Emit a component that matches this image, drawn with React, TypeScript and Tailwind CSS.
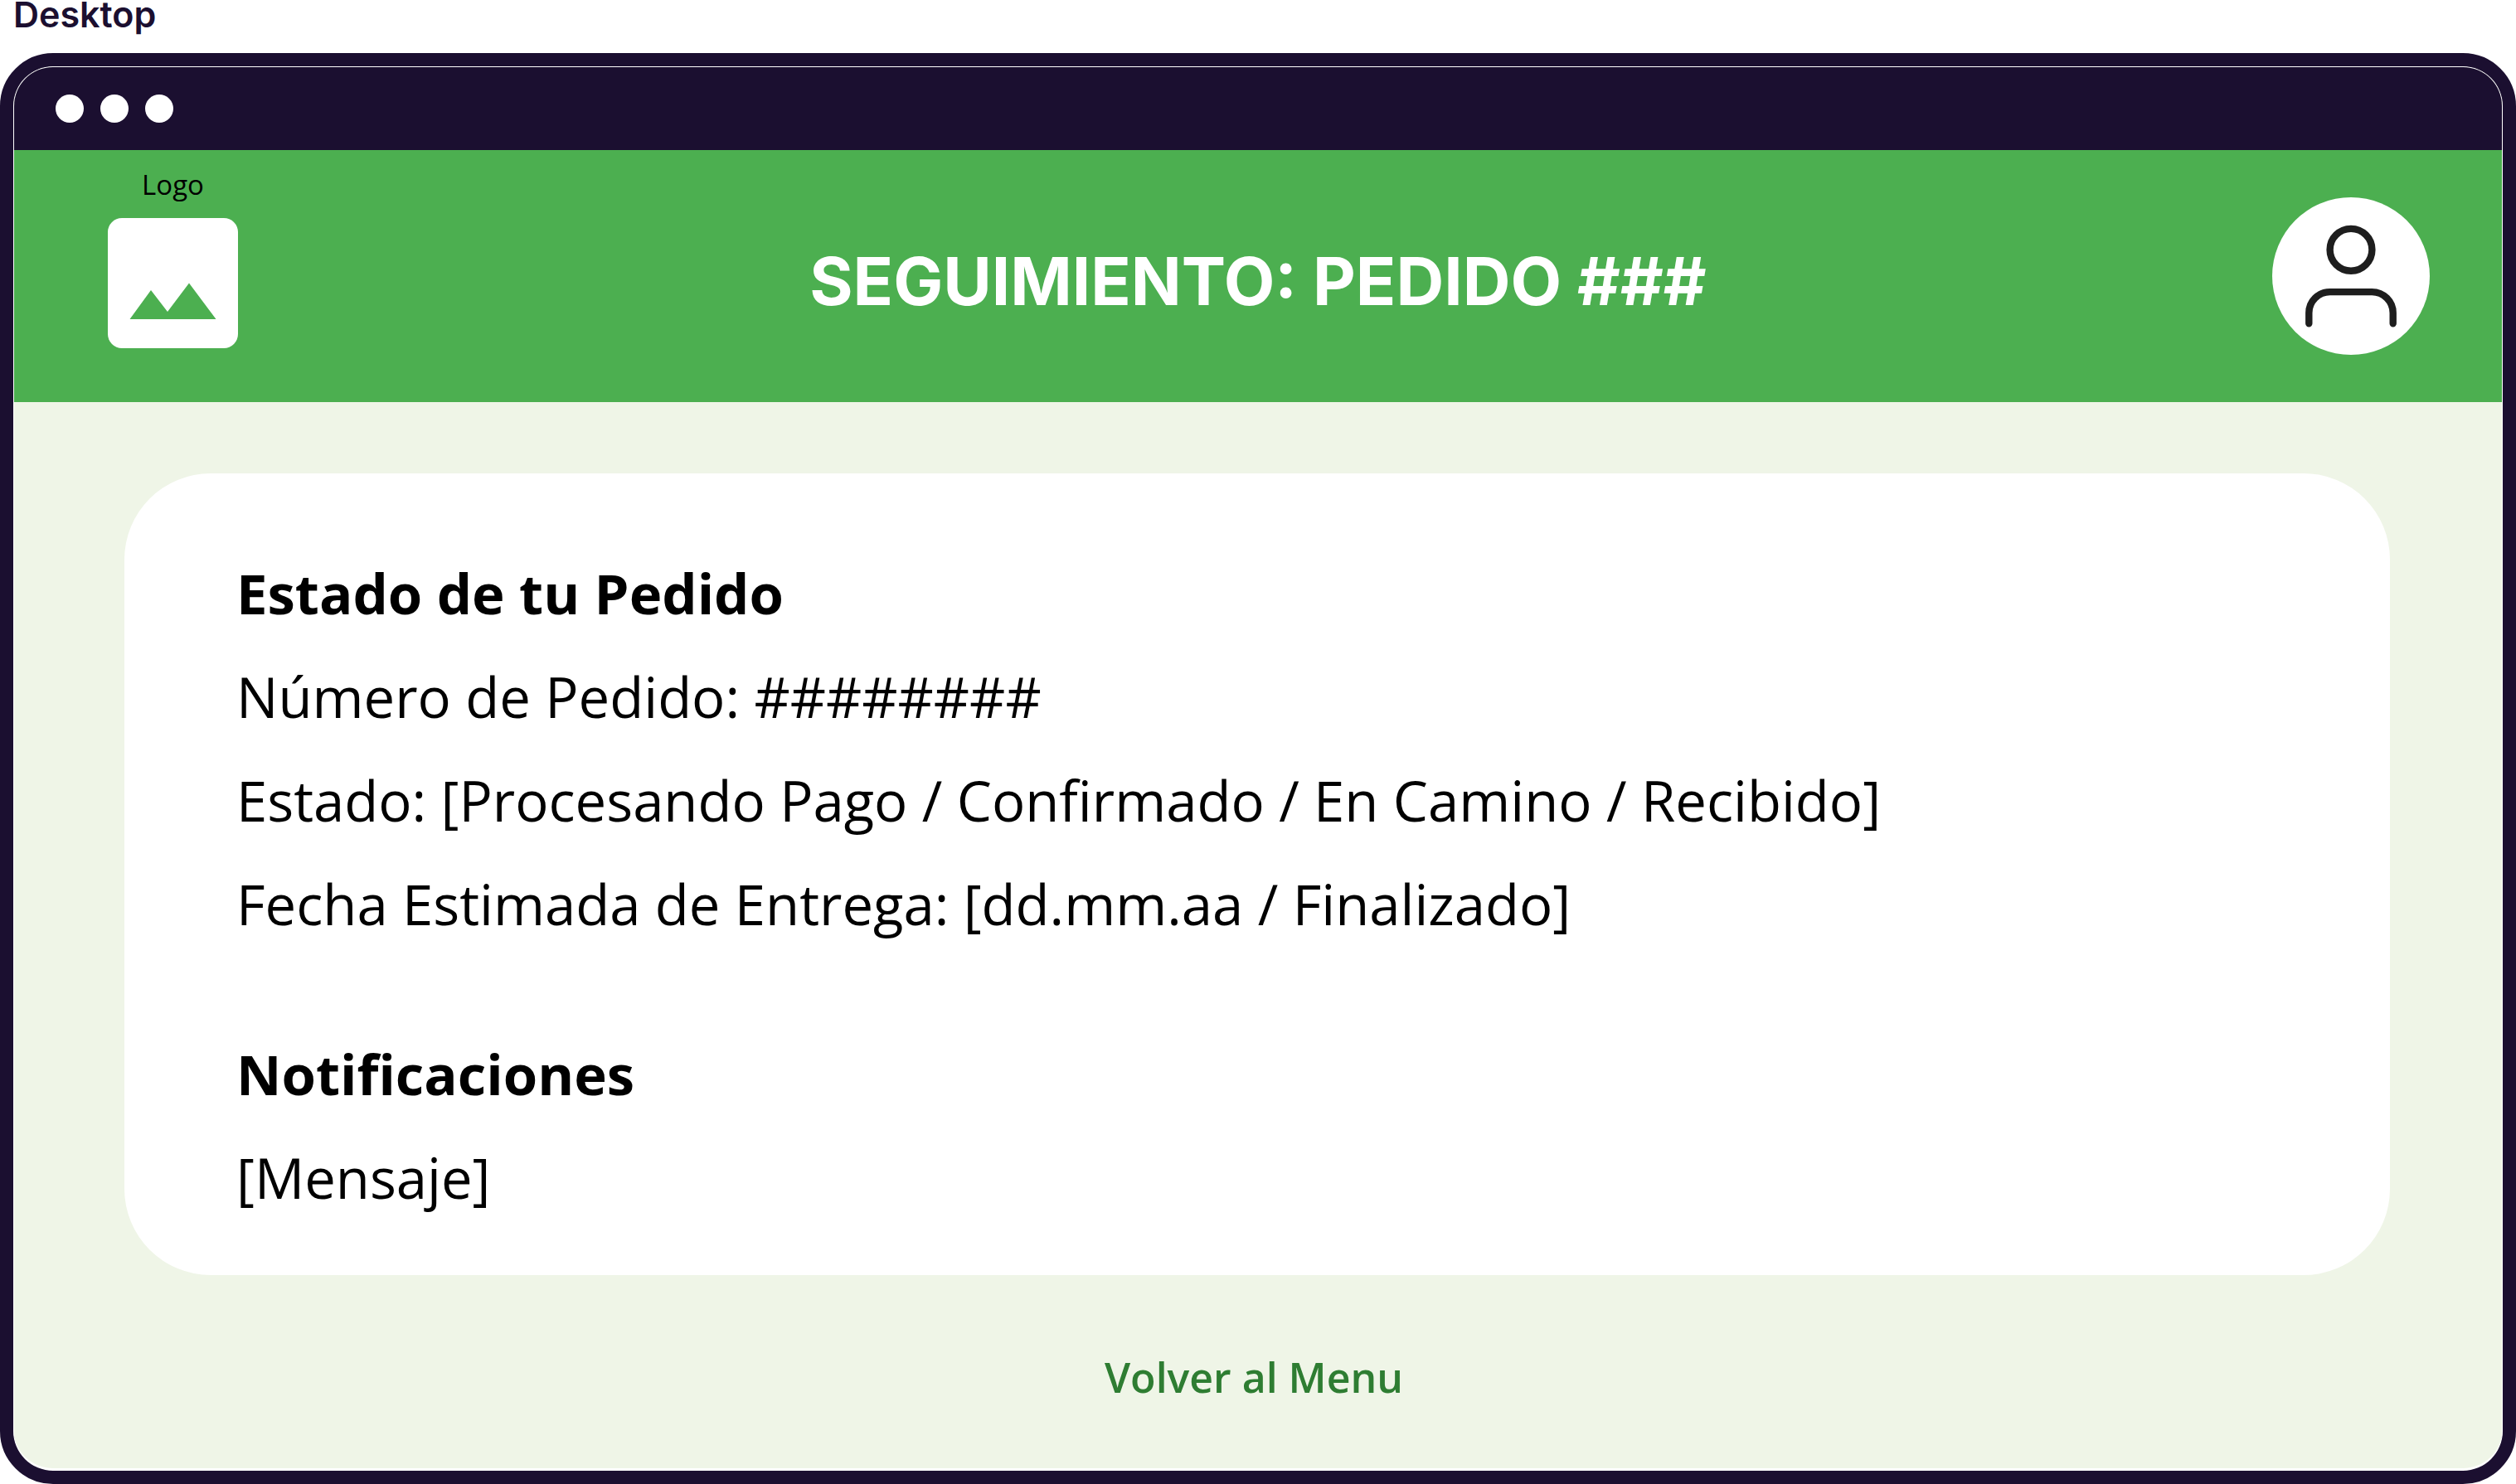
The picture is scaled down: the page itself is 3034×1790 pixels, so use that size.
const statusLines = [
  'Número de Pedido: ########',
  'Estado: [Procesando Pago / Confirmado / En Camino / Recibido]',
  'Fecha Estimada de Entrega: [dd.mm.aa / Finalizado]',
];

function WindowBar() {
  return (
    <div className="flex h-[100px] items-center gap-5 bg-[#1b0f30] px-[50px]">
      <span className="size-[34px] rounded-full bg-white" />
      <span className="size-[34px] rounded-full bg-white" />
      <span className="size-[34px] rounded-full bg-white" />
    </div>
  );
}

function Logo() {
  return (
    <div className="mb-[65px] ml-[113px] flex w-[157px] flex-col items-center gap-3 self-end">
      <span className="text-[33px] leading-[56px] text-black">Logo</span>
      <svg viewBox="0 0 157 157" className="size-[157px]" aria-hidden="true">
        <rect width="157" height="157" rx="17" fill="#fff" />
        <path d="M26.5 122 52 87l20 26 26-34.500 32.500 43.500z" fill="#4caf50" />
      </svg>
    </div>
  );
}

function ProfileButton() {
  return (
    <button
      type="button"
      aria-label="Perfil"
      className="mr-[87px] size-[190px] justify-self-end rounded-full bg-white"
    >
      <svg
        viewBox="0 0 190 190"
        fill="none"
        stroke="#1e1e1e"
        strokeWidth="8.400"
        strokeLinecap="round"
        className="size-full"
        aria-hidden="true"
      >
        <circle cx="95" cy="63.300" r="25.400" />
        <path d="M44.300 152.300V139.500a25.400 25.400 0 0 1 25.400-25.400h50.600a25.400 25.400 0 0 1 25.400 25.400v12.800" />
      </svg>
    </button>
  );
}

export default function App() {
  return (
    <div className="flex min-h-screen flex-col bg-white font-['Open_Sans',sans-serif]">
      <p className="h-16 pl-4 font-['Inter',sans-serif] text-[43px] leading-[34px] font-semibold text-[#1b0f30]">
        Desktop
      </p>
      <div className="flex flex-1 flex-col rounded-[64px] border-[16px] border-[#1b0f30] bg-[#1b0f30]">
        <div className="flex flex-1 flex-col overflow-hidden rounded-[48px] border border-b-[3px] border-white bg-[#eff5e7]">
          <WindowBar />
          <header className="grid h-[304px] grid-cols-[1fr_auto_1fr] items-center bg-[#4caf50]">
            <Logo />
            <h1 className="pt-3 font-['Inter',sans-serif] text-[80px] leading-none font-bold text-white">
              SEGUIMIENTO: PEDIDO ###
            </h1>
            <ProfileButton />
          </header>
          <main className="flex flex-1 flex-col pt-[86px] pr-[135px] pl-[133px]">
            <div className="flex flex-col gap-20 rounded-[104px] bg-white px-[135px] pt-[82px] pb-[55px] text-[67px] leading-[125px] text-black">
              <section>
                <h2 className="font-bold">Estado de tu Pedido</h2>
                {statusLines.map((line) => (
                  <p key={line}>{line}</p>
                ))}
              </section>
              <section>
                <h2 className="font-bold">Notificaciones</h2>
                <p>[Mensaje]</p>
              </section>
            </div>
            <div className="flex flex-1 items-center justify-center pt-3 pr-2">
              <a href="#menu" className="text-[50px] leading-[80px] font-semibold text-[#2e7d32]">
                Volver al Menu
              </a>
            </div>
          </main>
        </div>
      </div>
    </div>
  );
}
